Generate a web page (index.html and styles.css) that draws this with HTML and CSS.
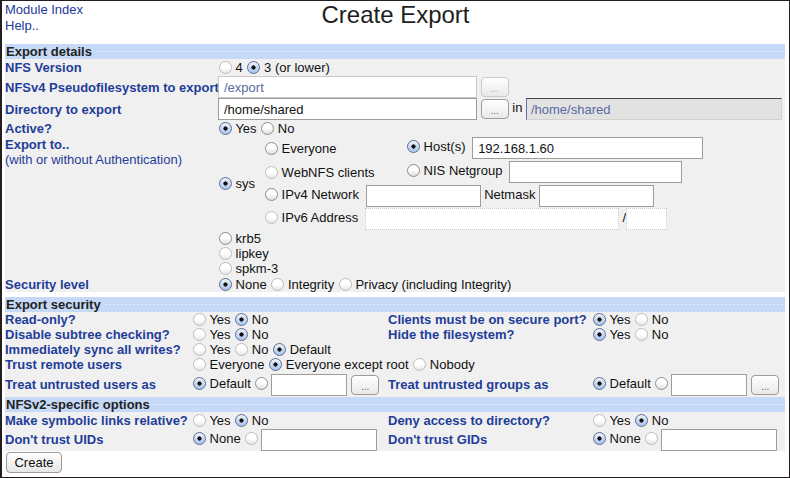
FILE: index.html
```html
<!DOCTYPE html>
<html>
<head>
<meta charset="utf-8">
<title>Create Export</title>
<link rel="stylesheet" href="styles.css">
</head>
<body>
<div class="frame">
  <div class="top">
    <div class="links"><a href="#">Module Index</a><br><a href="#">Help..</a></div>
    <h1 class="title">Create Export</h1>
    <div></div>
  </div>

  <table class="sec sec1">
    <colgroup><col class="w213"><col></colgroup>
    <tr class="hdr"><th colspan="2"><span>Export details</span></th></tr>
    <tr class="h17">
      <td class="lbl">NFS Version</td>
      <td><input type="radio" class="rd lt" name="ver"> 4 <input type="radio" class="rd" name="ver" checked> 3 (or lower)</td>
    </tr>
    <tr class="h22">
      <td class="lbl">NFSv4 Pseudofilesystem to export</td>
      <td><input type="text" class="tx dis w259" value="/export"> <button class="dots off">...</button></td>
    </tr>
    <tr class="h22">
      <td class="lbl">Directory to export</td>
      <td><input type="text" class="tx w259" value="/home/shared"> <button class="dots">...</button> in <input type="text" class="tx ro w255" value="/home/shared"></td>
    </tr>
    <tr class="h16">
      <td class="lbl">Active?</td>
      <td><input type="radio" class="rd" name="act" checked> Yes <input type="radio" class="rd" name="act"> No</td>
    </tr>
    <tr>
      <td class="lbl top-al">Export to..<br><span class="nb">(with or without Authentication)</span></td>
      <td>
        <table class="auth">
          <tr>
            <td class="syscell"><input type="radio" class="rd" name="auth" checked> sys</td>
            <td>
              <table class="hosts">
                <tr class="h24">
                  <td class="hc1"><input type="radio" class="rd" name="to"> Everyone</td>
                  <td><input type="radio" class="rd" name="to" checked> Host(s) <input type="text" class="tx w231" value="192.168.1.60"></td>
                </tr>
                <tr class="h24">
                  <td><input type="radio" class="rd lt" name="to"> WebNFS clients</td>
                  <td><input type="radio" class="rd" name="to"> NIS Netgroup <input type="text" class="tx w173"></td>
                </tr>
                <tr class="h23">
                  <td colspan="2"><input type="radio" class="rd" name="to"> IPv4 Network <input type="text" class="tx w115"> Netmask <input type="text" class="tx w115"></td>
                </tr>
                <tr class="h24">
                  <td colspan="2"><input type="radio" class="rd lt" name="to"> IPv6 Address <input type="text" class="tx dis6 w254"> /<input type="text" class="tx dis6 w41"></td>
                </tr>
              </table>
            </td>
          </tr>
          <tr class="h15"><td colspan="2"><input type="radio" class="rd" name="auth"> krb5</td></tr>
          <tr class="h15"><td colspan="2"><input type="radio" class="rd lt" name="auth"> lipkey</td></tr>
          <tr class="h15"><td colspan="2"><input type="radio" class="rd lt" name="auth"> spkm-3</td></tr>
        </table>
      </td>
    </tr>
    <tr class="h16">
      <td class="lbl">Security level</td>
      <td><input type="radio" class="rd" name="lvl" checked> None <input type="radio" class="rd lt" name="lvl"> Integrity <input type="radio" class="rd lt" name="lvl"> Privacy (including Integrity)</td>
    </tr>
  </table>

  <table class="sec sec2">
    <colgroup><col class="w187"><col class="w196"><col class="w204"><col class="w193"></colgroup>
    <tr class="hdr"><th colspan="4"><span>Export security</span></th></tr>
    <tr class="h15">
      <td class="lbl">Read-only?</td>
      <td><input type="radio" class="rd lt" name="ro"> Yes <input type="radio" class="rd" name="ro" checked> No</td>
      <td class="lbl">Clients must be on secure port?</td>
      <td><input type="radio" class="rd" name="sp" checked> Yes <input type="radio" class="rd lt" name="sp"> No</td>
    </tr>
    <tr class="h15">
      <td class="lbl">Disable subtree checking?</td>
      <td><input type="radio" class="rd lt" name="st"> Yes <input type="radio" class="rd" name="st" checked> No</td>
      <td class="lbl">Hide the filesystem?</td>
      <td><input type="radio" class="rd" name="hd" checked> Yes <input type="radio" class="rd lt" name="hd"> No</td>
    </tr>
    <tr class="h15">
      <td class="lbl">Immediately sync all writes?</td>
      <td colspan="3"><input type="radio" class="rd lt" name="sy"> Yes <input type="radio" class="rd lt" name="sy"> No <input type="radio" class="rd" name="sy" checked> Default</td>
    </tr>
    <tr class="h15">
      <td class="lbl">Trust remote users</td>
      <td colspan="3"><input type="radio" class="rd lt" name="tr"> Everyone <input type="radio" class="rd" name="tr" checked> Everyone except root <input type="radio" class="rd lt" name="tr"> Nobody</td>
    </tr>
    <tr class="h25">
      <td class="lbl">Treat untrusted users as</td>
      <td><input type="radio" class="rd" name="tu" checked> Default <input type="radio" class="rd" name="tu"><input type="text" class="tx w76"> <button class="dots">...</button></td>
      <td class="lbl">Treat untrusted groups as</td>
      <td><input type="radio" class="rd" name="tg" checked> Default <input type="radio" class="rd" name="tg"><input type="text" class="tx w76"> <button class="dots">...</button></td>
    </tr>
    <tr class="hdr"><th colspan="4"><span>NFSv2-specific options</span></th></tr>
    <tr class="h16">
      <td class="lbl">Make symbolic links relative?</td>
      <td><input type="radio" class="rd lt" name="sl"> Yes <input type="radio" class="rd" name="sl" checked> No</td>
      <td class="lbl">Deny access to directory?</td>
      <td><input type="radio" class="rd lt" name="dn"> Yes <input type="radio" class="rd" name="dn" checked> No</td>
    </tr>
    <tr class="h23">
      <td class="lbl">Don't trust UIDs</td>
      <td><input type="radio" class="rd" name="ui" checked> None <input type="radio" class="rd lt" name="ui"><input type="text" class="tx w116"></td>
      <td class="lbl">Don't trust GIDs</td>
      <td><input type="radio" class="rd" name="gi" checked> None <input type="radio" class="rd lt" name="gi"><input type="text" class="tx w116"></td>
    </tr>
  </table>

  <div class="actions"><button class="create">Create</button></div>
</div>
</body>
</html>
```

FILE: styles.css
```css
* { box-sizing: border-box; }
html, body { margin: 0; padding: 0; background: #fff; }
body {
  font-family: "Liberation Sans", Arial, sans-serif;
  font-size: 13px;
  color: #111;
  width: 790px;
  height: 478px;
  overflow: hidden;
}
.frame {
  width: 790px;
  height: 478px;
  border: 1px solid #231f20;
  border-left-width: 2px;
}
.top {
  display: grid;
  grid-template-columns: 1fr auto 1fr;
  height: 43px;
}
.links {
  padding: 1px 0 0 3px;
  line-height: 16px;
}
.links a { color: #24399a; text-decoration: none; }
.title {
  margin: 0;
  font-size: 24px;
  font-weight: normal;
  line-height: normal;
  color: #1e1e1e;
}

.sec {
  margin-left: 3px;
  width: 780px;
  border-collapse: collapse;
  border-spacing: 0;
  table-layout: fixed;
}
.sec1 { margin-bottom: 5px; }
.w213 { width: 213px; }
.w187 { width: 187px; }
.w196 { width: 196px; }
.w204 { width: 204px; }
.w193 { width: 193px; }

.sec td {
  padding: 0;
  white-space: nowrap;
  vertical-align: middle;
  line-height: 15px;
  background: #f0f0f0;
}
.hdr th {
  height: 15px;
  padding: 0;
  text-align: left;
  font-weight: bold;
  color: #222;
  line-height: 15px;
  background: linear-gradient(to right, #fff 1px, transparent 1px) 0 7px / 4px 1px repeat-x, #c6d9f7;
}
.hdr span { background: #c6d9f7; padding: 0 2px 0 1px; }

.lbl { font-weight: bold; color: #1f3d99; }
.lbl .nb { font-weight: normal; }
.sec td.top-al { vertical-align: top; padding-top: 1px; }

.h15 > td { height: 15px; }
.h16 > td { height: 16px; }
.h17 > td { height: 17px; }
.h22 > td { height: 22px; }
.h23 > td { height: 23px; }
.h24 > td { height: 24px; }
.h25 > td { height: 25px; }

.auth, .hosts { border-collapse: collapse; border-spacing: 0; }
.sec td.syscell { width: 46px; }
.sec td.hc1 { width: 142px; }

.rd {
  -webkit-appearance: none;
  appearance: none;
  width: 13px;
  height: 13px;
  margin: 0 0 0 1px;
  border: 1px solid #8d8d8d;
  border-radius: 50%;
  background: linear-gradient(#fff 45%, #dedede);
  vertical-align: -2px;
}
.rd.lt { border-color: #bcbcbc; background: linear-gradient(#fff 50%, #e6e6e6); }
.rd:checked {
  border-color: #5b6d98;
  background: radial-gradient(circle, #111 0 1.8px, transparent 2.4px), linear-gradient(#eef3fb, #a9c4ec);
}
.rd + .tx { margin-left: 3px; }

.tx {
  height: 22px;
  margin: 0;
  padding: 0 5px;
  border: 1px solid #a39b96;
  background: #fff;
  font-family: "Liberation Sans", Arial, sans-serif;
  font-size: 13px;
  color: #111;
  vertical-align: middle;
}
.tx.dis { border-color: #cdc7c3; color: #5a6aa2; }
.tx.dis6 { border: 1px dotted #c9c9c9; }
.tx.ro {
  border: 1px solid #d2d2d2;
  border-top-color: #444;
  border-left-color: #5f70aa;
  color: #5a6aa2;
  padding-left: 4px;
  background: radial-gradient(circle at 1px 1px, #d4d4d4 0.6px, transparent 0.9px) 0 0 / 2px 2px, #fbfbfb;
}
.w259 { width: 259px; }
.w255 { width: 256px; }
.w231 { width: 231px; }
.w173 { width: 173px; }
.w115 { width: 115px; }
.w116 { width: 116px; }
.w254 { width: 254px; }
.w41 { width: 41px; }
.w76 { width: 76px; }

.dots {
  width: 28px;
  height: 20px;
  margin: 0;
  padding: 4px 0 0;
  border: 1px solid #a19a95;
  border-radius: 4px;
  background: linear-gradient(#fff, #e9e9e9);
  font-family: "Liberation Sans", Arial, sans-serif;
  font-size: 10px;
  line-height: 10px;
  color: #666;
  vertical-align: middle;
}
.dots.off { border-color: #cfc9c5; color: #aaa; }

.actions { padding: 1px 0 0 4px; }
.create {
  width: 56px;
  height: 21px;
  margin: 0;
  padding: 0;
  border: 1px solid #a19a95;
  border-radius: 4px;
  background: linear-gradient(#fff, #e6e6e6);
  font-family: "Liberation Sans", Arial, sans-serif;
  font-size: 13px;
  color: #111;
}
```
